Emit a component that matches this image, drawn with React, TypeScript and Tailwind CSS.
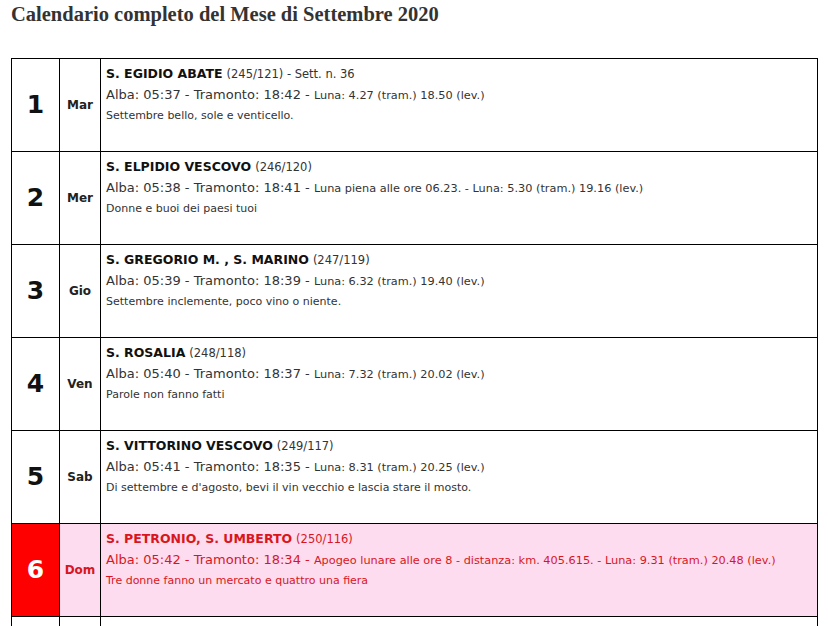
import React from "react";

type Day = {
    n: number;
    dow: string;
    name: string;
    code: string;
    extra?: string;
    alba: string;
    tram: string;
    moon: string;
    proverb: string;
    sunday?: boolean;
};

const days: Day[] = [
    { n: 1, dow: "Mar", name: "S. EGIDIO ABATE", code: "(245/121)", extra: " - Sett. n. 36", alba: "05:37", tram: "18:42", moon: "Luna: 4.27 (tram.) 18.50 (lev.)", proverb: "Settembre bello, sole e venticello." },
    { n: 2, dow: "Mer", name: "S. ELPIDIO VESCOVO", code: "(246/120)", alba: "05:38", tram: "18:41", moon: "Luna piena alle ore 06.23. - Luna: 5.30 (tram.) 19.16 (lev.)", proverb: "Donne e buoi dei paesi tuoi" },
    { n: 3, dow: "Gio", name: "S. GREGORIO M. , S. MARINO", code: "(247/119)", alba: "05:39", tram: "18:39", moon: "Luna: 6.32 (tram.) 19.40 (lev.)", proverb: "Settembre inclemente, poco vino o niente." },
    { n: 4, dow: "Ven", name: "S. ROSALIA", code: "(248/118)", alba: "05:40", tram: "18:37", moon: "Luna: 7.32 (tram.) 20.02 (lev.)", proverb: "Parole non fanno fatti" },
    { n: 5, dow: "Sab", name: "S. VITTORINO VESCOVO", code: "(249/117)", alba: "05:41", tram: "18:35", moon: "Luna: 8.31 (tram.) 20.25 (lev.)", proverb: "Di settembre e d'agosto, bevi il vin vecchio e lascia stare il mosto." },
    { n: 6, dow: "Dom", name: "S. PETRONIO, S. UMBERTO", code: "(250/116)", alba: "05:42", tram: "18:34", moon: "Apogeo lunare alle ore 8 - distanza: km. 405.615. - Luna: 9.31 (tram.) 20.48 (lev.)", proverb: "Tre donne fanno un mercato e quattro una fiera", sunday: true },
];

function Row({ d }: { d: Day }) {
    const sun = d.sunday;
    const txt = sun ? "text-[#d9161d]" : "text-[#333]";
    return (
        <div className={`flex h-[93px] border-b border-black ${sun ? "bg-[#fddcef]" : ""}`}>
            <div
                className={`flex w-[48px] shrink-0 items-center justify-center border-r border-black text-[25px] font-bold ${
                    sun ? "bg-[#ff0000] text-white" : "text-[#111]"
                }`}
            >
                {d.n}
            </div>
            <div
                className={`flex w-[41px] shrink-0 items-center justify-center border-r border-black text-[12px] font-bold ${
                    sun ? "text-[#d9161d]" : "text-[#222]"
                }`}
            >
                {d.dow}
            </div>
            <div className={`flex-1 whitespace-nowrap border-r border-black pl-[5px] pt-[4px] ${txt}`}>
                <div className="h-[21px] overflow-visible text-[12.5px] leading-[21px]">
                    <b className={sun ? "" : "text-[#111]"}>{d.name}</b>{" "}
                    <span className="text-[11.5px]">
                        {d.code}
                        {d.extra}
                    </span>
                </div>
                <div className="h-[21px] overflow-visible text-[13px] leading-[21px]">
                    Alba: {d.alba} - Tramonto: {d.tram} -{" "}
                    <span className="text-[11.3px]">{d.moon}</span>
                </div>
                <div className="h-[21px] text-[11px] leading-[21px]">{d.proverb}</div>
            </div>
        </div>
    );
}

export default function App() {
    return (
        <div className="h-[626px] overflow-hidden bg-white" style={{ fontFamily: "'DejaVu Sans', Verdana, sans-serif" }}>
            <h1
                className="pl-[11px] pt-[2px] text-[20.5px] font-bold leading-[24px] text-[#333]"
                style={{ fontFamily: "'Liberation Serif', 'DejaVu Serif', serif" }}
            >
                Calendario completo del Mese di Settembre 2020
            </h1>
            <div className="ml-[11px] mt-[32px] w-[807px] border-l border-t border-black">
                {days.map((d) => (
                    <Row key={d.n} d={d} />
                ))}
                <div className="flex h-[93px]">
                    <div className="w-[48px] shrink-0 border-r border-black" />
                    <div className="w-[41px] shrink-0 border-r border-black" />
                    <div className="flex-1 border-r border-black" />
                </div>
            </div>
        </div>
    );
}
